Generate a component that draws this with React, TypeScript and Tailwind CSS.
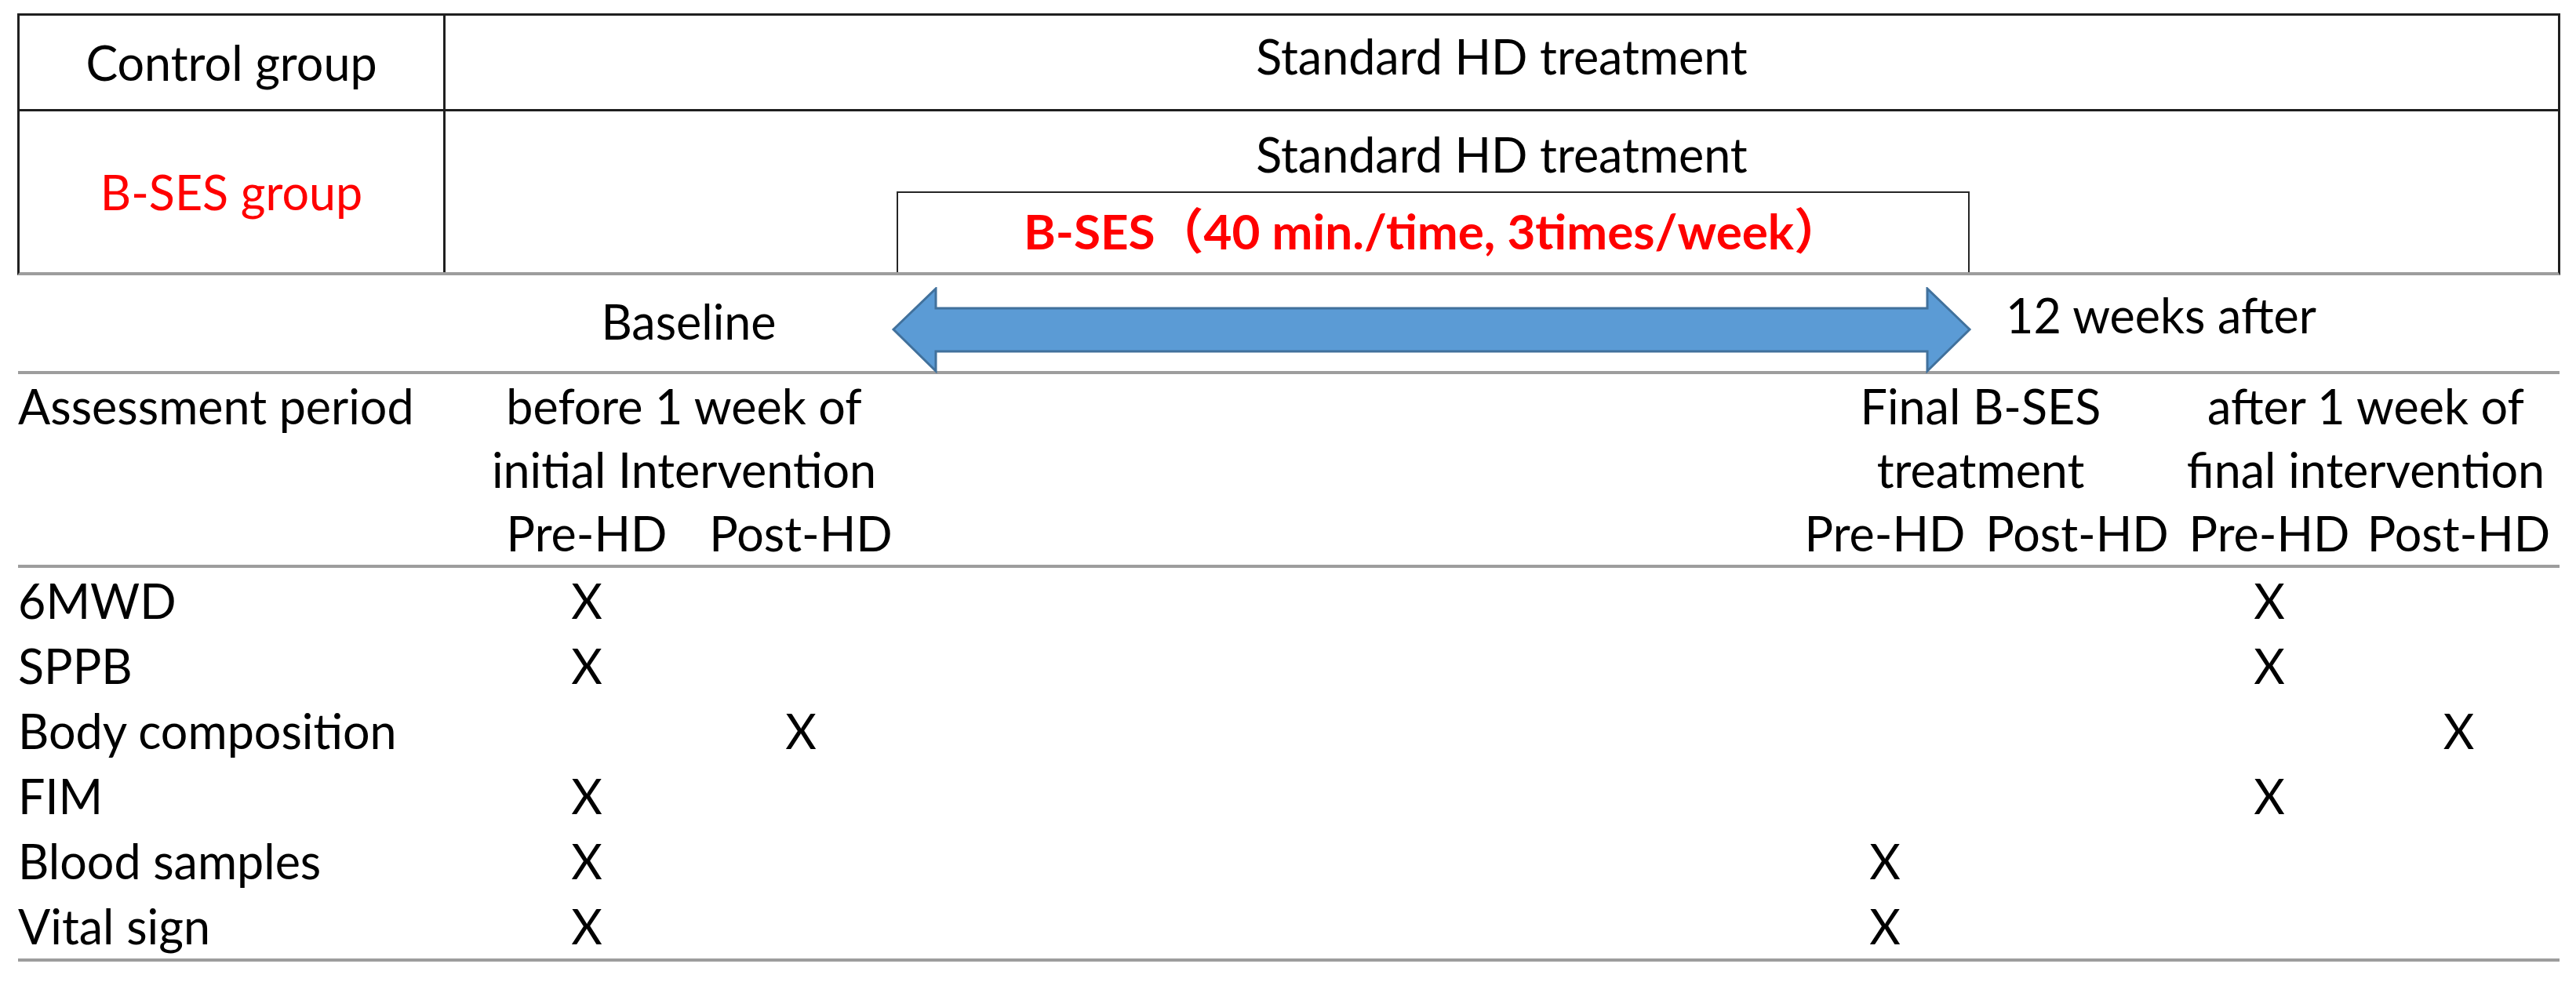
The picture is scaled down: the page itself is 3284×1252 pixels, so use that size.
import React from "react";

const rows: { label: string; marks: boolean[] }[] = [
  { label: "6MWD", marks: [true, false, false, false, true, false] },
  { label: "SPPB", marks: [true, false, false, false, true, false] },
  { label: "Body composition", marks: [false, true, false, false, false, true] },
  { label: "FIM", marks: [true, false, false, false, true, false] },
  { label: "Blood samples", marks: [true, false, true, false, false, false] },
  { label: "Vital sign", marks: [true, false, true, false, false, false] },
];

function Arrow() {
  return (
    <svg width="1378" height="110" viewBox="0 0 1378 110" className="block shrink-0">
      <polygon
        points="3,54 57,2 57,27 1321,27 1321,2 1375,54 1321,107 1321,82 57,82 57,107"
        fill="#5b9bd5"
        stroke="#41719c"
        strokeWidth="3"
        strokeLinejoin="miter"
      />
    </svg>
  );
}

export default function App() {
  return (
    <div className="w-[3284px] h-[1252px] bg-white text-black pt-[17px] font-['Lato','Noto_Sans_CJK_JP',sans-serif] text-[61px] leading-[73px]">
      {/* Top table */}
      <div className="ml-[22px] w-[3242px] border-t-[3px] border-x-[3px] border-b-[4px] border-t-[#1f1f1f] border-x-[#1f1f1f] border-b-[#9d9d9d] grid grid-cols-[543px_1fr]">
        <div className="h-[122px] border-r-[3px] border-b-[3px] border-[#1f1f1f] flex items-center justify-center whitespace-nowrap">
          Control group
        </div>
        <div className="h-[122px] border-b-[3px] border-[#1f1f1f] flex items-center justify-center pb-[16px] whitespace-nowrap">
          Standard HD treatment
        </div>
        <div className="h-[205px] border-r-[3px] border-[#1f1f1f] flex items-center justify-center text-[#ff0000] whitespace-nowrap">
          B-SES group
        </div>
        <div className="h-[205px] flex flex-col pt-[18px]">
          <div className="text-center whitespace-nowrap">Standard HD treatment</div>
          <div className="mt-[11px] ml-[575px] w-[1368px] h-[103px] border-t-2 border-x-2 border-[#262626] flex items-center justify-center pb-[4px] font-bold text-[#ff0000] text-[62px] whitespace-nowrap">
            B-SES（40 min./time, 3times/week）
          </div>
        </div>
      </div>

      {/* Timeline */}
      <div className="ml-[23px] w-[3240px] h-[122px] flex items-start">
        <div className="w-[1113px] shrink-0 pl-[640px] pr-[43px] pt-[22px] text-center whitespace-nowrap">
          Baseline
        </div>
        <div className="pt-[15px]">
          <Arrow />
        </div>
        <div className="ml-[43px] pt-[14px] whitespace-nowrap">12 weeks after</div>
      </div>

      {/* Assessment table */}
      <div className="ml-[23px] w-[3240px]">
        <div className="h-[4px] bg-[#9d9d9d]" />
        <div className="grid grid-cols-[589px_272px_274px_1132px_226px_264px_226px_257px] leading-[81px] whitespace-nowrap">
          <div className="col-start-1 row-start-1">Assessment period</div>
          <div className="col-start-2 col-span-2 row-start-1 row-span-2 text-center pr-[26px]">
            <div>before 1 week of</div>
            <div>initial Intervention</div>
          </div>
          <div className="col-start-5 col-span-2 row-start-1 row-span-2 text-center pr-[20px]">
            <div>Final B-SES</div>
            <div>treatment</div>
          </div>
          <div className="col-start-7 col-span-2 row-start-1 row-span-2 text-center pr-[11px]">
            <div>after 1 week of</div>
            <div>final intervention</div>
          </div>
          <div className="col-start-2 row-start-3 text-center">Pre-HD</div>
          <div className="col-start-3 row-start-3 text-center">Post-HD</div>
          <div className="col-start-5 row-start-3 text-center">Pre-HD</div>
          <div className="col-start-6 row-start-3 text-center">Post-HD</div>
          <div className="col-start-7 row-start-3 text-center">Pre-HD</div>
          <div className="col-start-8 row-start-3 text-center">Post-HD</div>
        </div>
        <div className="h-[4px] bg-[#9d9d9d]" />
        <div className="leading-[83px]">
          {rows.map((r) => (
            <div
              key={r.label}
              className="grid grid-cols-[589px_272px_274px_1132px_226px_264px_226px_257px] whitespace-nowrap"
            >
              <div>{r.label}</div>
              <div className="text-center">{r.marks[0] ? "X" : ""}</div>
              <div className="text-center">{r.marks[1] ? "X" : ""}</div>
              <div />
              <div className="text-center">{r.marks[2] ? "X" : ""}</div>
              <div className="text-center">{r.marks[3] ? "X" : ""}</div>
              <div className="text-center">{r.marks[4] ? "X" : ""}</div>
              <div className="text-center">{r.marks[5] ? "X" : ""}</div>
            </div>
          ))}
        </div>
        <div className="h-[4px] bg-[#9d9d9d]" />
      </div>
    </div>
  );
}
